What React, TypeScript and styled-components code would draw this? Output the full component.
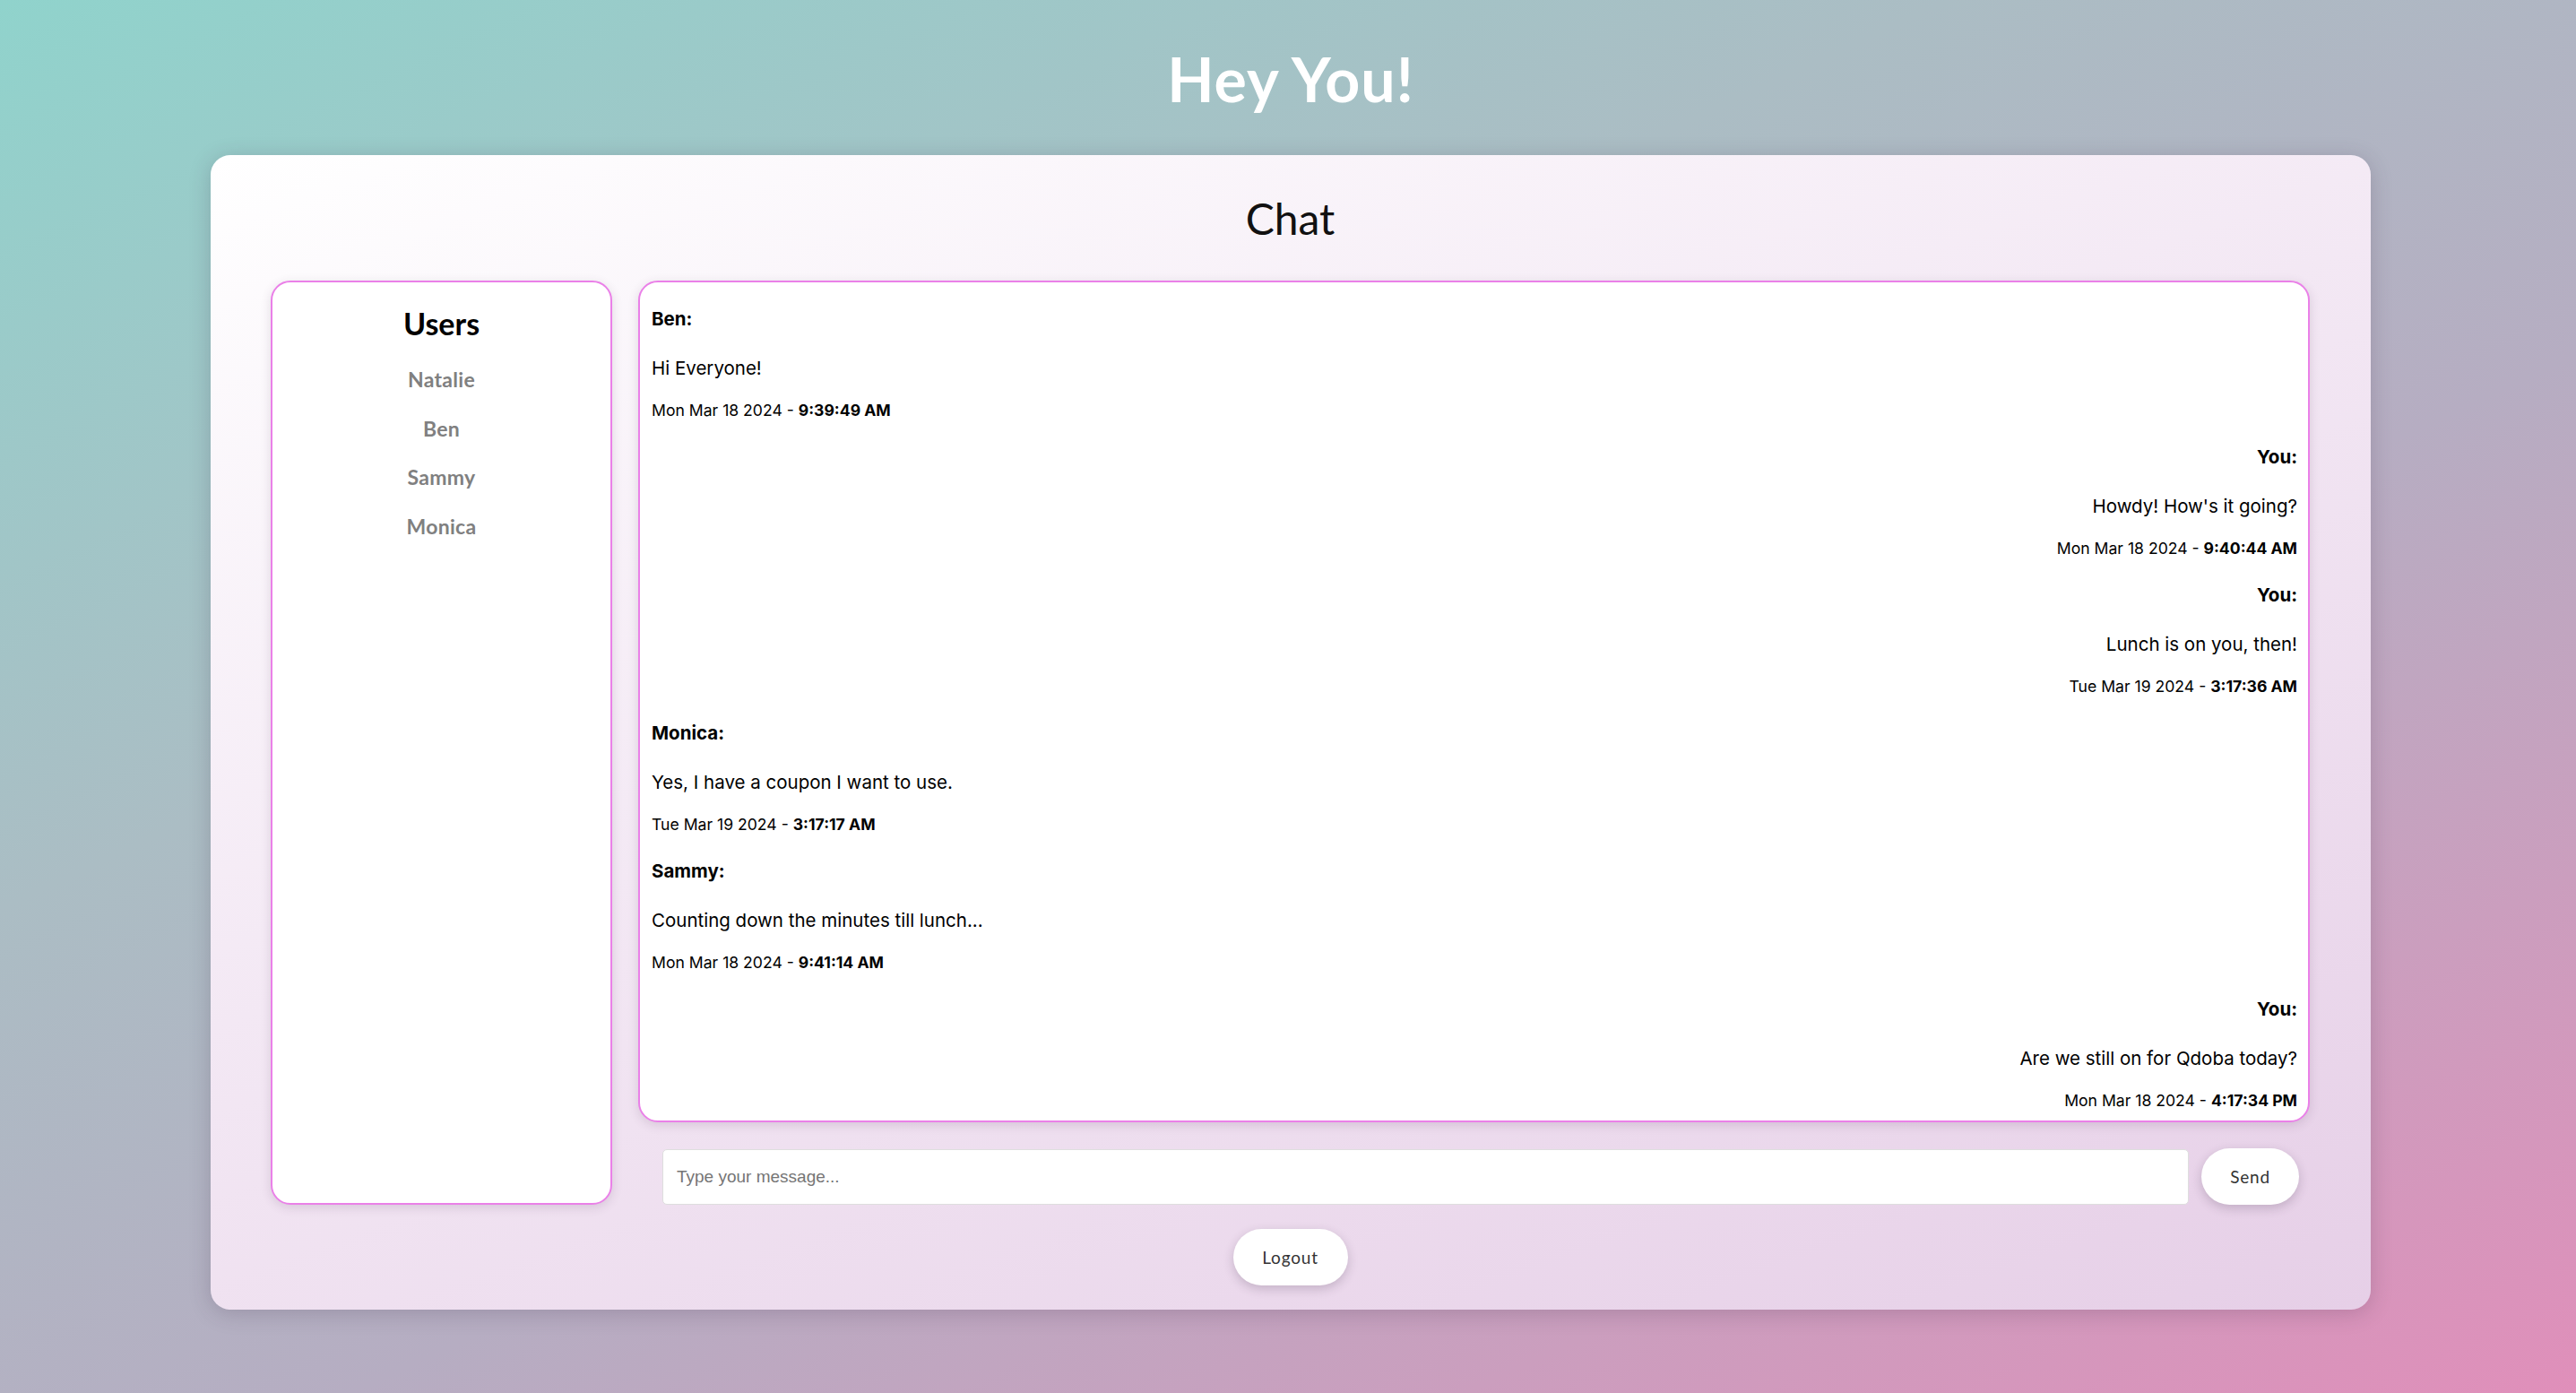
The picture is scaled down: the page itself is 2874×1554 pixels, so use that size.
import React from "react";
import styled, { createGlobalStyle } from "styled-components";

const GlobalStyle = createGlobalStyle`
  html, body {
    margin: 0;
    padding: 0;
  }
  body {
    min-height: 100vh;
    background: linear-gradient(155deg, #90d3cc 0%, #abbdc4 35%, #b6adc2 60%, #e08fba 100%);
    font-family: Lato, "Open Sans", sans-serif;
  }
  * { box-sizing: border-box; }
`;

const Page = styled.div`
  min-height: 100vh;
  display: flex;
  flex-direction: column;
  align-items: center;
  padding: 49px 0 0 6px;
`;

const Title = styled.h1`
  margin: 0;
  font-family: Lato, "Open Sans", sans-serif;
  font-weight: 700;
  font-size: 68px;
  line-height: 77px;
  color: #ffffff;
  letter-spacing: 1px;
`;

const Card = styled.main`
  margin-top: 47px;
  width: 2410px;
  padding: 43px 68px 27px 67px;
  border-radius: 22px;
  background: linear-gradient(160deg, #ffffff 0%, #f3e8f4 45%, #e6cfe7 100%);
  box-shadow: 0 4px 24px rgba(60, 40, 70, 0.22);
  display: flex;
  flex-direction: column;
  align-items: stretch;
`;

const CardTitle = styled.h2`
  margin: 0;
  text-align: center;
  font-family: Lato, "Open Sans", sans-serif;
  font-weight: 400;
  font-size: 48px;
  line-height: 56px;
  color: #111111;
`;

const ChatLayout = styled.div`
  margin-top: 41px;
  display: grid;
  grid-template-columns: 381px 1fr;
  gap: 29px;
  height: 1031px;
`;

const Panel = styled.section`
  background: #ffffff;
  border: 2px solid #ea80e8;
  border-radius: 22px;
  box-shadow: 0 3px 12px rgba(80, 50, 90, 0.16);
`;

const UsersPanel = styled(Panel)`
  display: flex;
  flex-direction: column;
  align-items: center;
  padding-top: 26px;
`;

const UsersHeading = styled.h3`
  margin: 0;
  font-family: Lato, "Open Sans", sans-serif;
  font-weight: 700;
  font-size: 34px;
  line-height: 40px;
  color: #000000;
`;

const UserList = styled.ul`
  list-style: none;
  margin: 27px 0 0;
  padding: 0;
  display: flex;
  flex-direction: column;
  align-items: center;
  gap: 24.5px;
`;

const UserItem = styled.li`
  font-family: Lato, "Open Sans", sans-serif;
  font-weight: 700;
  font-size: 23px;
  line-height: 30px;
  letter-spacing: 0.3px;
  color: #808080;
`;

const ChatColumn = styled.div`
  display: flex;
  flex-direction: column;
  gap: 29px;
  min-height: 0;
`;

const MessagesPanel = styled(Panel)`
  flex: 1;
  overflow: hidden;
  padding: 28px 12px 11px 13px;
  display: flex;
  flex-direction: column;
  gap: 28px;
`;

const Message = styled.div<{ $own?: boolean }>`
  display: flex;
  flex-direction: column;
  text-align: ${(p) => (p.$own ? "right" : "left")};
  font-family: Inter, "Noto Sans", sans-serif;
  color: #000000;
`;

const Sender = styled.div`
  font-weight: 700;
  font-size: 20.5px;
  line-height: 26px;
`;

const Body = styled.div`
  margin-top: 28px;
  font-size: 20.5px;
  line-height: 28px;
  font-weight: 400;
`;

const Stamp = styled.div`
  margin-top: 22px;
  font-size: 17.6px;
  line-height: 22px;
  font-weight: 400;
`;

const Time = styled.b`
  font-weight: 700;
`;

const InputRow = styled.form`
  display: flex;
  align-items: center;
  gap: 14px;
  padding: 0 12px 0 27px;
  height: 63px;
`;

const MessageInput = styled.input`
  flex: 1;
  height: 62px;
  border: 1px solid #dedede;
  border-radius: 5px;
  background: #ffffff;
  padding: 0 15px;
  font-family: "Liberation Sans", Arial, sans-serif;
  font-size: 19px;
  color: #222;
  outline: none;
  &::placeholder {
    color: #757575;
  }
`;

const PillButton = styled.button<{ $width: number }>`
  width: ${(p) => p.$width}px;
  height: 63px;
  border: none;
  border-radius: 32px;
  background: #ffffff;
  box-shadow: 0 4px 12px rgba(60, 40, 70, 0.22);
  font-family: Lato, "Open Sans", sans-serif;
  font-size: 19px;
  letter-spacing: 0.8px;
  color: #333333;
  cursor: pointer;
`;

const LogoutRow = styled.div`
  margin-top: 27px;
  display: flex;
  justify-content: center;
`;

type Msg = { sender: string; text: string; date: string; time: string; own?: boolean };

const messages: Msg[] = [
  { sender: "Ben", text: "Hi Everyone!", date: "Mon Mar 18 2024", time: "9:39:49 AM" },
  { sender: "You", text: "Howdy! How's it going?", date: "Mon Mar 18 2024", time: "9:40:44 AM", own: true },
  { sender: "You", text: "Lunch is on you, then!", date: "Tue Mar 19 2024", time: "3:17:36 AM", own: true },
  { sender: "Monica", text: "Yes, I have a coupon I want to use.", date: "Tue Mar 19 2024", time: "3:17:17 AM" },
  { sender: "Sammy", text: "Counting down the minutes till lunch...", date: "Mon Mar 18 2024", time: "9:41:14 AM" },
  { sender: "You", text: "Are we still on for Qdoba today?", date: "Mon Mar 18 2024", time: "4:17:34 PM", own: true },
];

const users = ["Natalie", "Ben", "Sammy", "Monica"];

export default function App() {
  return (
    <>
      <GlobalStyle />
      <Page>
        <Title>Hey You!</Title>
        <Card>
          <CardTitle>Chat</CardTitle>
          <ChatLayout>
            <UsersPanel>
              <UsersHeading>Users</UsersHeading>
              <UserList>
                {users.map((u) => (
                  <UserItem key={u}>{u}</UserItem>
                ))}
              </UserList>
            </UsersPanel>
            <ChatColumn>
              <MessagesPanel>
                {messages.map((m, i) => (
                  <Message key={i} $own={m.own}>
                    <Sender>{m.sender}:</Sender>
                    <Body>{m.text}</Body>
                    <Stamp>
                      {m.date} - <Time>{m.time}</Time>
                    </Stamp>
                  </Message>
                ))}
              </MessagesPanel>
              <InputRow onSubmit={(e) => e.preventDefault()}>
                <MessageInput placeholder="Type your message..." />
                <PillButton type="submit" $width={109}>Send</PillButton>
              </InputRow>
            </ChatColumn>
          </ChatLayout>
          <LogoutRow>
            <PillButton type="button" $width={128}>Logout</PillButton>
          </LogoutRow>
        </Card>
      </Page>
    </>
  );
}
